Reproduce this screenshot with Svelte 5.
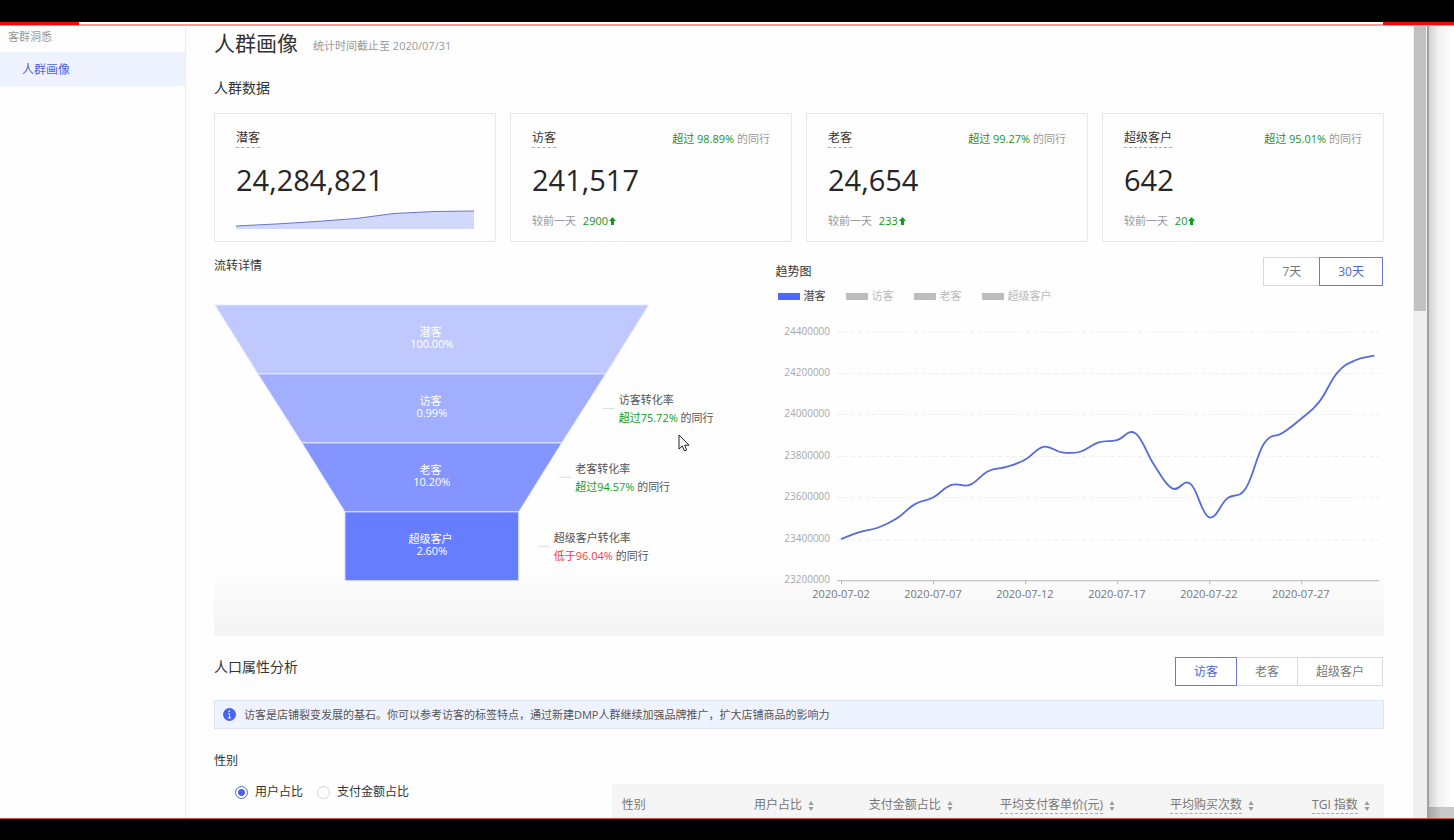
<script lang="ts">
	const cards = [
		{ name: '潜客', value: '24,284,821', rank: '', diff: '' },
		{ name: '访客', value: '241,517', rank: '98.89%', diff: '2900' },
		{ name: '老客', value: '24,654', rank: '99.27%', diff: '233' },
		{ name: '超级客户', value: '642', rank: '95.01%', diff: '20' }
	]

	// half widths of the top and bottom edge of every layer
	const funnel = [
		{ name: '潜客', rate: '100.00%', top: 217, bottom: 174, color: '#c0c9fe', note: '', low: false },
		{ name: '访客', rate: '0.99%', top: 174, bottom: 130, color: '#a2aefe', note: '超过75.72%', low: false },
		{ name: '老客', rate: '10.20%', top: 130, bottom: 87, color: '#8495ff', note: '超过94.57%', low: false },
		{ name: '超级客户', rate: '2.60%', top: 87, bottom: 87, color: '#667dff', note: '低于96.04%', low: true }
	]
	const layer = 69
	const center = 218
	const noteX = (f: { top: number; bottom: number }) => center + (f.top + f.bottom) / 2 + 35

	// thousands of people, one value a day from 2020-07-02
	const trend = [
		23398, 23432, 23453, 23496, 23566, 23599, 23660, 23660, 23726, 23747,
		23781, 23844, 23817, 23820, 23865, 23876, 23909, 23760, 23643, 23665,
		23504, 23595, 23643, 23860, 23910, 23978, 24061, 24203, 24263, 24284
	]
	const ticks = [24400, 24200, 24000, 23800, 23600, 23400, 23200]
	const days = ['2020-07-02', '2020-07-07', '2020-07-12', '2020-07-17', '2020-07-22', '2020-07-27']

	const px = (i: number) => 65 + i * 18.38
	const py = (v: number) => 270 - ((v - 23200) / 200) * 41.4

	function smoothLine(values: number[]) {
		const p = values.map((v, i) => [px(i), py(v)])
		const last = p.length - 1

		// slope at each point, taken from its two neighbours
		const slope = p.map((_, i) => {
			const a = p[Math.max(i - 1, 0)]
			const b = p[Math.min(i + 1, last)]
			return (b[1] - a[1]) / (b[0] - a[0])
		})

		let d = `M${p[0][0]} ${p[0][1]}`
		for (let i = 0; i < last; i++) {
			const [x0, y0] = p[i]
			const [x1, y1] = p[i + 1]
			const h = (x1 - x0) * 0.4
			d += `C${x0 + h} ${y0 + slope[i] * h} ${x1 - h} ${y1 - slope[i + 1] * h} ${x1} ${y1}`
		}
		return d
	}

	const columns = [
		{ name: '用户占比', tip: false },
		{ name: '支付金额占比', tip: false },
		{ name: '平均支付客单价(元)', tip: true },
		{ name: '平均购买次数', tip: true },
		{ name: 'TGI 指数', tip: true }
	]

	let range = $state('30天')
	let series = $state('潜客')
	let group = $state('访客')
	let share = $state('用户占比')
</script>

<div class="screen">
	<div class="edge top"><i></i><i></i></div>

	<div class="window">
		<aside>
			<p>客群洞悉</p>
			<a href="#portrait">人群画像</a>
		</aside>

		<main id="portrait">
			<header>
				<h1>人群画像</h1>
				<span>统计时间截止至 2020/07/31</span>
			</header>

			<h2>人群数据</h2>

			<div class="cards">
				{#each cards as card}
					<article class="card">
						<div class="card-head">
							<h3 class="tip">{card.name}</h3>
							{#if card.rank}
								<span><b>超过 {card.rank}</b> 的同行</span>
							{/if}
						</div>
						<strong>{card.value}</strong>
						{#if card.diff}
							<p>
								较前一天 <b>{card.diff}</b>
								<svg width="7" height="8" viewBox="0 0 7 8"><path d="M3.5 0 7 4H5V8H2V4H0Z" fill="#149a1c" /></svg>
							</p>
						{:else}
							<svg class="spark" viewBox="0 0 238 19" preserveAspectRatio="none">
								<path d="M0 16 40 14 80 11.500 120 8.500 158 3.500 198 1.500 238 1V19H0Z" fill="#d0d8fc" />
								<path d="M0 16 40 14 80 11.500 120 8.500 158 3.500 198 1.500 238 1" fill="none" stroke="#6a74cf" />
							</svg>
						{/if}
					</article>
				{/each}
			</div>

			<div class="charts">
				<section>
					<h3>流转详情</h3>
					<svg class="funnel" viewBox="0 0 562 300">
						{#each funnel as f, i}
							<g transform="translate(0 {15 + i * layer})">
								<path
									d="M{center - f.top} 0H{center + f.top}L{center + f.bottom} {layer}H{center - f.bottom}Z"
									fill={f.color}
									stroke="#e3eaff"
								/>
								<text class="on">
									<tspan x={center} y="31">{f.name}</tspan>
									<tspan x={center} y="43">{f.rate}</tspan>
								</text>
								{#if f.note}
									<path d="M{noteX(f) - 16} 34.500h12" stroke="#dcdcdc" />
									<text x={noteX(f)} y="30">{f.name}转化率</text>
									<text x={noteX(f)} y="48"><tspan class={f.low ? 'low' : 'high'}>{f.note}</tspan> 的同行</text>
								{/if}
							</g>
						{/each}
					</svg>
				</section>

				<section>
					<div class="bar">
						<h3>趋势图</h3>
						<div class="switch">
							{#each ['7天', '30天'] as r}
								<button class:active={range == r} onclick={() => (range = r)}>{r}</button>
							{/each}
						</div>
					</div>
					<div class="legend">
						{#each cards as card}
							<button class:active={series == card.name} onclick={() => (series = card.name)}><i></i>{card.name}</button>
						{/each}
					</div>
					<svg class="trend" viewBox="0 0 608 300">
						{#each ticks as t}
							<text class="value" x="54" y={py(t) + 3}>{t * 1000}</text>
							{#if t > 23200}
								<path d="M61 {Math.round(py(t)) + 0.5}H603" stroke="#efeff1" stroke-dasharray="4 3" />
							{/if}
						{/each}
						<path d="M61 270.500H603" stroke="#b4b4b4" />
						{#each days as day, i}
							<path d="M{Math.round(px(i * 5)) + 0.5} 270v4" stroke="#b4b4b4" />
							<text class="day" x={px(i * 5)} y="288">{day}</text>
						{/each}
						<path d={smoothLine(trend)} fill="none" stroke="#566bdc" stroke-width="1.800" />
					</svg>
				</section>
			</div>

			<div class="bar people">
				<h2>人口属性分析</h2>
				<div class="switch">
					{#each ['访客', '老客', '超级客户'] as g}
						<button class:active={group == g} onclick={() => (group = g)}>{g}</button>
					{/each}
				</div>
			</div>

			<div class="info">
				<svg width="13" height="13" viewBox="0 0 13 13">
					<circle cx="6.500" cy="6.500" r="6.500" fill="#4a63ee" />
					<path d="M5 5.500h1.500V10M4.800 10h3.400" fill="none" stroke="#e4e9ff" />
					<circle cx="6.300" cy="3.200" r=".9" fill="#e4e9ff" />
				</svg>
				访客是店铺裂变发展的基石。你可以参考访客的标签特点，通过新建DMP人群继续加强品牌推广，扩大店铺商品的影响力
			</div>

			<h3 class="gender">性别</h3>

			<div class="detail">
				<div class="radios">
					{#each ['用户占比', '支付金额占比'] as s}
						<label><input type="radio" name="share" value={s} bind:group={share} />{s}</label>
					{/each}
				</div>
				<table>
					<thead>
						<tr>
							<th>性别</th>
							{#each columns as c}
								<th>
									<span class:tip={c.tip}>{c.name}</span>
									<svg width="6" height="10" viewBox="0 0 6 10"><path d="M3 0 5.500 4H.5ZM.5 6H5.500L3 10Z" fill="#999" /></svg>
								</th>
							{/each}
						</tr>
					</thead>
				</table>
			</div>

			<svg class="cursor" width="12" height="18" viewBox="0 0 12 18">
				<path d="M1 1V15L4.300 12 6.500 17 8.700 16 6.600 11.200H11Z" fill="#fff" stroke="#222" />
			</svg>
		</main>

		<div class="scrollbar"><i></i></div>
		<div class="outside"><i></i></div>
	</div>

	<div class="edge bottom"></div>
</div>

<style>
	:global(body) {
		background: #000;
	}

	.screen {
		display: flex;
		flex-direction: column;
		box-sizing: border-box;
		height: 100vh;
		padding: 22px 0 21px;
		overflow: hidden;
		font-family: 'Open Sans', 'Noto Sans CJK SC', sans-serif;
		font-size: 11px;
		line-height: 16px;
		color: #333;
	}

	h1, h2, h3, p {
		margin: 0;
		font-weight: 400;
	}

	h1 {
		font-size: 21px;
		line-height: 30px;
	}

	h2 {
		font-size: 14px;
		line-height: 20px;
	}

	h3 {
		font-size: 12px;
		line-height: 18px;
		color: #333;
	}

	b {
		font-weight: 400;
		color: #1a9422;
	}

	button {
		font: inherit;
		cursor: pointer;
	}

	.edge {
		flex: none;
	}

	.edge.top {
		display: flex;
		justify-content: space-between;
		height: 2px;
		border-bottom: 2px solid #fa9a96;
		background: #fff;
	}

	.edge.top i {
		width: 79px;
		height: 3px;
		background: #f20a0a;
	}

	.edge.top i:last-child {
		width: 71px;
	}

	.edge.bottom {
		height: 1px;
		background: #d4504a;
	}

	.window {
		display: flex;
		flex: 1;
		min-height: 0;
		overflow: hidden;
		background: #fefefe;
	}

	aside {
		flex: none;
		width: 185px;
		border-right: 1px solid #ececec;
	}

	aside p {
		padding: 3px 8px 7px;
		color: #999;
	}

	aside a {
		display: block;
		padding: 9px 22px 7px;
		background: #eff3ff;
		color: #5064e0;
		font-size: 12px;
		line-height: 18px;
		text-decoration: none;
	}

	main {
		position: relative;
		flex: 1;
		min-width: 0;
		padding: 2px 29px 0 28px;
	}

	header {
		display: flex;
		align-items: center;
		gap: 15px;
		margin-bottom: 20px;
	}

	header span {
		padding-top: 6px;
		color: #999;
	}

	.cards {
		display: grid;
		grid-template-columns: repeat(4, 1fr);
		gap: 14px;
		margin-top: 15px;
	}

	.card {
		display: flex;
		flex-direction: column;
		box-sizing: border-box;
		height: 129px;
		padding: 15px 21px 12px;
		border: 1px solid #e8e8e8;
	}

	.card-head {
		display: flex;
		justify-content: space-between;
		align-items: center;
		color: #999;
	}

	.tip {
		border-bottom: 1px dashed #aaa;
	}

	.card strong {
		display: block;
		margin: 12px 0 auto;
		font-size: 29px;
		line-height: 40px;
		font-weight: 400;
		color: #262626;
	}

	.card p {
		color: #999;
	}

	.card p b {
		margin-left: 4px;
	}

	.card p svg {
		margin-left: -2px;
	}

	.spark {
		display: block;
		width: 100%;
		height: 19px;
	}

	.charts {
		display: grid;
		grid-template-columns: 48fr 52fr;
		padding: 15px 0 26px;
		background: linear-gradient(transparent 82%, #f4f4f4);
	}

	.charts svg {
		display: block;
		width: 100%;
	}

	.funnel {
		margin-top: 15px;
	}

	.trend {
		margin-top: 6px;
	}

	text {
		font-size: 11px;
		fill: #555;
	}

	text.on {
		fill: #fff;
		text-anchor: middle;
	}

	text.value {
		font-size: 10px;
		fill: #a8a8a8;
		text-anchor: end;
	}

	text.day {
		fill: #777;
		text-anchor: middle;
	}

	.high {
		fill: #12a012;
	}

	.low {
		fill: #f03c3c;
	}

	.bar {
		display: flex;
		justify-content: space-between;
		align-items: center;
	}

	.switch {
		display: flex;
		padding-right: 1px;
	}

	.switch button {
		height: 29px;
		margin-left: -1px;
		padding: 0 18px;
		border: 1px solid #d9d9d9;
		background: #fff;
		color: #777;
		font-size: 12px;
	}

	.switch button.active {
		position: relative;
		border-color: #6678d8;
		color: #5064e0;
	}

	.legend {
		display: flex;
		gap: 20px;
		padding: 2px 2px 0;
	}

	.legend button {
		display: flex;
		align-items: center;
		gap: 4px;
		padding: 0;
		border: 0;
		background: none;
		color: #bbb;
	}

	.legend button i {
		width: 22px;
		height: 7px;
		background: #bdbdbd;
	}

	.legend button.active {
		color: #444;
	}

	.legend button.active i {
		background: #4d66fb;
	}

	.people {
		align-items: flex-start;
		margin: 21px 0 14px;
	}

	.info {
		display: flex;
		align-items: center;
		gap: 8px;
		height: 27px;
		padding: 0 8px;
		border: 1px solid #dee5fa;
		background: #eff3ff;
		color: #555;
	}

	.gender {
		margin: 23px 0 14px;
	}

	.detail {
		display: flex;
		justify-content: space-between;
		align-items: flex-start;
	}

	.radios {
		display: flex;
		gap: 14px;
		padding-left: 21px;
		font-size: 12px;
	}

	label {
		display: flex;
		align-items: center;
		gap: 7px;
	}

	input {
		appearance: none;
		width: 13px;
		height: 13px;
		margin: 0;
		border: 1px solid #d9d9d9;
		border-radius: 50%;
	}

	input:checked {
		border-color: #4a63ee;
		background: radial-gradient(circle, #4a63ee 3px, #fff 4px);
	}

	table {
		width: 66%;
		table-layout: fixed;
		border-collapse: collapse;
		background: #f5f5f5;
		color: #777;
		font-size: 12px;
	}

	th {
		box-sizing: border-box;
		width: 18%;
		height: 42px;
		padding: 0 14px 0 0;
		font-weight: 400;
		text-align: right;
		white-space: nowrap;
	}

	th:nth-child(2) {
		width: 15%;
	}

	th:nth-child(4) {
		width: 21%;
	}

	th:nth-child(6) {
		width: 15%;
	}

	th:first-child {
		width: 13%;
		padding: 0 0 0 10px;
		text-align: left;
	}

	th svg {
		margin-left: 3px;
		vertical-align: -2px;
	}

	.cursor {
		position: absolute;
		top: 408px;
		left: 492px;
	}

	.scrollbar {
		flex: none;
		width: 12px;
		padding: 0 1px;
		background: #efefef;
	}

	.scrollbar i {
		display: block;
		height: 36%;
		background: #c1c1c1;
	}

	.outside {
		display: flex;
		align-items: flex-end;
		flex: none;
		width: 25px;
		border-left: 2px solid #a0a0a0;
		background: linear-gradient(90deg, #d2d2d2, #f3f3f3 40%, #fff);
	}

	.outside i {
		width: 100%;
		height: 11px;
		background: linear-gradient(90deg, #a8a8a8, #cacaca 50%);
	}
</style>
